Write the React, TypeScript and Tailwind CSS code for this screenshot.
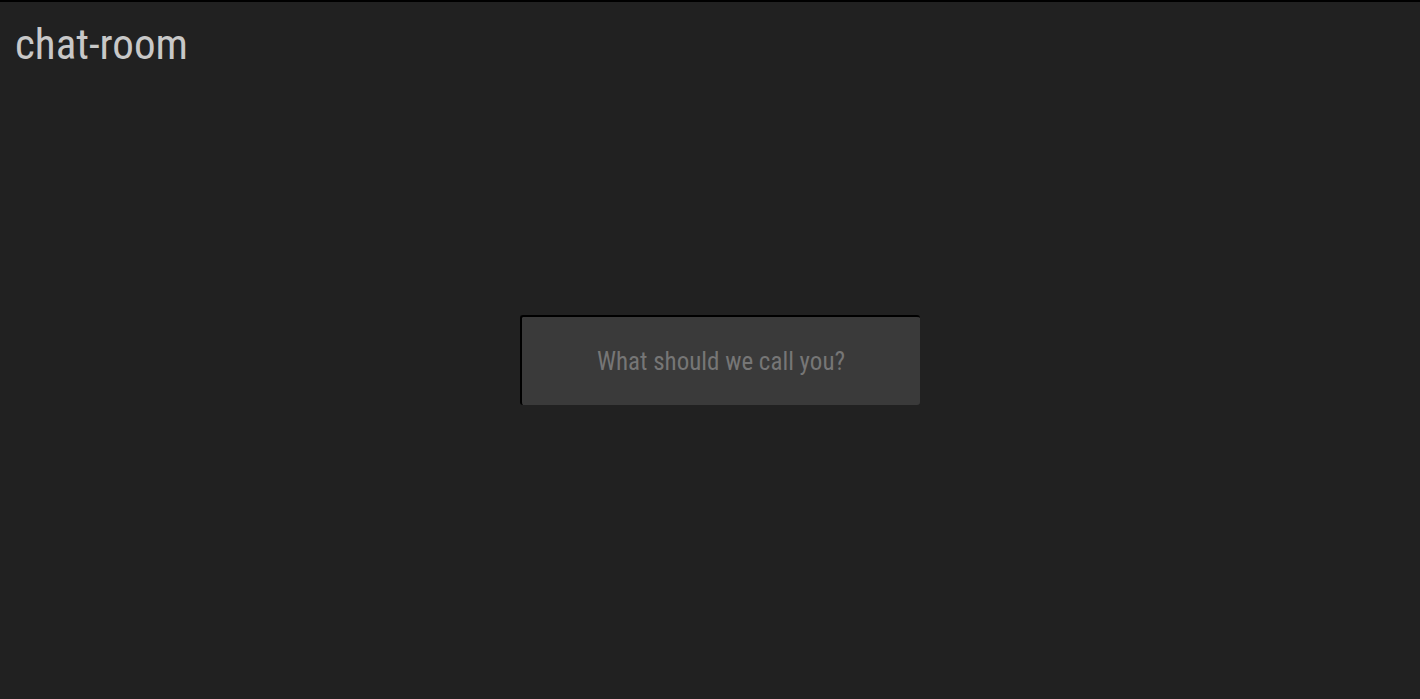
export default function App() {
  return (
    <div
      className="min-h-[699px] bg-[#212121] border-t-[2px] border-black flex flex-col font-stretch-condensed"
      style={{ fontFamily: "Roboto, 'Liberation Sans', sans-serif" }}
    >
      <h1 className="text-[43px] leading-none text-[#c8c8c8] pl-[15px] pt-[21px] font-stretch-condensed">
        chat-room
      </h1>
      <div className="flex justify-center pl-5 mt-[249px]">
        <input
          type="text"
          placeholder="What should we call you?"
          className="w-[400px] h-[90px] bg-[#3a3a3a] rounded-[3px] border-t-2 border-l-2 border-black text-center text-[25px] font-stretch-condensed text-[#ccc] placeholder:text-[#767676] outline-none"
        />
      </div>
    </div>
  );
}
